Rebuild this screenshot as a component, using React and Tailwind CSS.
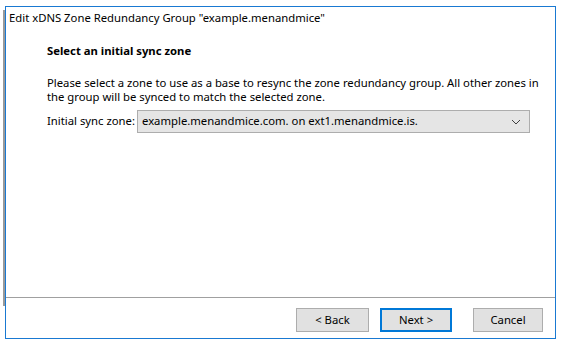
import React from "react";

const font = { fontFamily: '"Noto Sans", "Open Sans", sans-serif' };

function WizardButton({ children, primary, width }) {
  return (
    <button
      className={
        primary
          ? "h-[24px] bg-[#e1e1e1] border-2 border-[#0078d7] text-[11.3px] text-black leading-none"
          : "h-[24px] bg-[#e1e1e1] border border-[#adadad] text-[11.3px] text-black leading-none"
      }
      style={{ width }}
    >
      {children}
    </button>
  );
}

export default function App() {
  return (
    <div className="w-[568px] h-[348px] bg-white flex pt-[6px] pl-[3px]" style={font}>
      {/* shadow strip on the left */}
      <div className="w-[2px] h-[296px] mt-[4px] bg-[#9a9a9a]" />
      <div className="w-[551px] h-[333px] border border-[#1979d2] flex flex-col bg-white">
        <div className="flex-1 flex flex-col">
          <div className="pl-[3px] pt-[3px] text-[11.3px] text-black leading-[16px]">
            Edit xDNS Zone Redundancy Group "example.menandmice"
          </div>
          <div className="pl-[41px] pr-[10px] pt-[17px]">
            <div className="text-[11.3px] font-bold text-black leading-[16px]">
              Select an initial sync zone
            </div>
            <p className="mt-[17px] text-[11.3px] text-black leading-[14px] whitespace-nowrap">
              Please select a zone to use as a base to resync the zone redundancy group. All other zones in
              <br />
              the group will be synced to match the selected zone.
            </p>
            <div className="mt-[6px] flex items-center">
              <span className="text-[11.3px] text-black w-[90px]">Initial sync zone:</span>
              <div className="w-[393px] h-[23px] bg-[#e5e5e5] border border-[#adadad] flex items-center justify-between pl-[4px] pr-[8px]">
                <span className="text-[11.3px] text-black">example.menandmice.com. on ext1.menandmice.is.</span>
                <svg width="10" height="6" viewBox="0 0 10 6" fill="none">
                  <path d="M1 1l4 4 4-4" stroke="#404040" strokeWidth="1" />
                </svg>
              </div>
            </div>
          </div>
        </div>
        <div className="h-[41px] border-t border-[#a0a0a0] flex items-start justify-end pt-[10px] pr-[12px]">
          <WizardButton width={73}>&lt; Back</WizardButton>
          <div className="w-[11px]" />
          <WizardButton primary width={72}>Next &gt;</WizardButton>
          <div className="w-[21px]" />
          <WizardButton width={70}>Cancel</WizardButton>
        </div>
      </div>
    </div>
  );
}
